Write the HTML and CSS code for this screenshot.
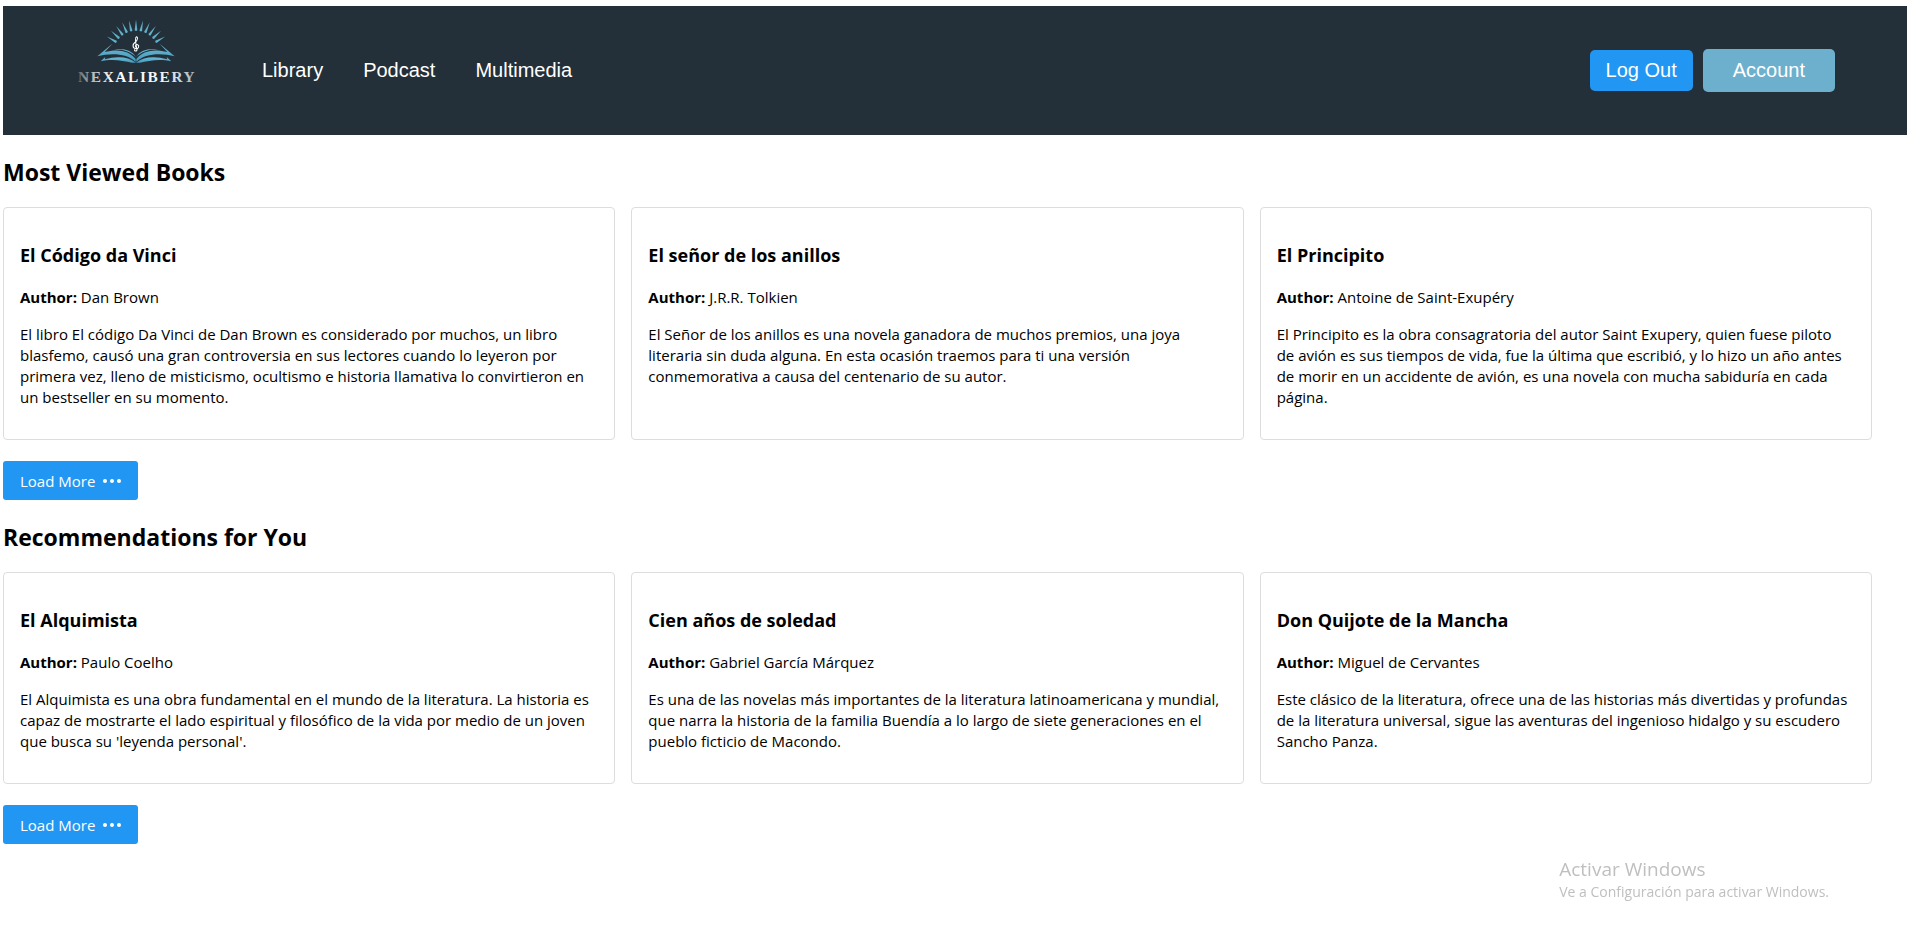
FILE: index.html
```html
<!DOCTYPE html>
<html lang="en">
<head>
<meta charset="utf-8">
<meta name="viewport" content="width=device-width, initial-scale=1">
<title>Nexalibery</title>
<link rel="stylesheet" href="styles.css">
</head>
<body>
<header class="header">
  <svg class="logo" viewBox="0 0 405 333" role="img" aria-label="Nexalibery">
    <defs>
      <linearGradient id="blue" x1="0" y1="0" x2="0" y2="1">
        <stop offset="0" stop-color="#6fc0d4"/>
        <stop offset="1" stop-color="#4496bd"/>
      </linearGradient>
      <linearGradient id="silver">
        <stop offset="0" stop-color="#5d686f"/>
        <stop offset=".12" stop-color="#b4babd"/>
        <stop offset=".3" stop-color="#ffffff"/>
        <stop offset=".75" stop-color="#f1f2f3"/>
        <stop offset="1" stop-color="#a9b0b4"/>
      </linearGradient>
      <path id="ray" d="M198 14 L202 46 Q198 50 194 46 Z"/>
      <g id="page">
        <path d="M127 86 L82 124 C120 114 172 114 197 141 V132 C177 106 142 101 104 111 Z"/>
        <path d="M198 126 C188 108 162 99 133 103 C164 103 184 113 198 126 Z"/>
        <path d="M106 126 L92 139 C128 130 160 138 186 143 H198 C174 126 144 122 104 133 Z"/>
      </g>
    </defs>
    <g fill="#62afc8">
      <use href="#ray"/>
      <use href="#ray" transform="rotate(-12 198 115)"/>
      <use href="#ray" transform="rotate(-24 198 115)"/>
      <use href="#ray" transform="rotate(-36 198 115)"/>
      <use href="#ray" transform="rotate(-48 198 115)"/>
      <use href="#ray" transform="rotate(-60 198 115)"/>
      <use href="#ray" transform="rotate(12 198 115)"/>
      <use href="#ray" transform="rotate(24 198 115)"/>
      <use href="#ray" transform="rotate(36 198 115)"/>
      <use href="#ray" transform="rotate(48 198 115)"/>
      <use href="#ray" transform="rotate(60 198 115)"/>
    </g>
    <g fill="url(#blue)">
      <use href="#page"/>
      <use href="#page" transform="translate(396 0) scale(-1 1)"/>
    </g>
    <path d="M200 98 C194 95 196 87 203 89 C209 92 206 102 198 101 C186 99 187 88 196 81 C204 74 204 65 199 65 C194 67 196 80 201 104 C201 110 192 109 194 104" fill="none" stroke="#fff" stroke-width="3.2" stroke-linecap="round"/>
    <text class="wordmark" x="24" y="200" fill="url(#silver)">NEXALIBERY</text>
  </svg>
  <nav class="nav">
    <a href="#library">Library</a>
    <a href="#podcast">Podcast</a>
    <a href="#multimedia">Multimedia</a>
  </nav>
  <div class="actions">
    <button class="logout" type="button">Log Out</button>
    <button class="account" type="button">Account</button>
  </div>
</header>
<main>
  <section>
    <h2>Most Viewed Books</h2>
    <div class="books">
      <article class="book">
        <h3>El Código da Vinci</h3>
        <p><strong>Author:</strong> Dan Brown</p>
        <p>El libro El código Da Vinci de Dan Brown es considerado por muchos, un libro blasfemo, causó una gran controversia en sus lectores cuando lo leyeron por primera vez, lleno de misticismo, ocultismo e historia llamativa lo convirtieron en un bestseller en su momento.</p>
      </article>
      <article class="book">
        <h3>El señor de los anillos</h3>
        <p><strong>Author:</strong> J.R.R. Tolkien</p>
        <p>El Señor de los anillos es una novela ganadora de muchos premios, una joya literaria sin duda alguna. En esta ocasión traemos para ti una versión conmemorativa a causa del centenario de su autor.</p>
      </article>
      <article class="book">
        <h3>El Principito</h3>
        <p><strong>Author:</strong> Antoine de Saint-Exupéry</p>
        <p>El Principito es la obra consagratoria del autor Saint Exupery, quien fuese piloto de avión es sus tiempos de vida, fue la última que escribió, y lo hizo un año antes de morir en un accidente de avión, es una novela con mucha sabiduría en cada página.</p>
      </article>
    </div>
    <button class="load-more" type="button">Load More
      <svg class="dots" viewBox="0 0 18 6" aria-hidden="true"><circle cx="2" cy="2" r="2"/><circle cx="9" cy="2" r="2"/><circle cx="16" cy="2" r="2"/></svg>
    </button>
  </section>
  <section>
    <h2>Recommendations for You</h2>
    <div class="books">
      <article class="book">
        <h3>El Alquimista</h3>
        <p><strong>Author:</strong> Paulo Coelho</p>
        <p>El Alquimista es una obra fundamental en el mundo de la literatura. La historia es capaz de mostrarte el lado espiritual y filosófico de la vida por medio de un joven que busca su 'leyenda personal'.</p>
      </article>
      <article class="book">
        <h3>Cien años de soledad</h3>
        <p><strong>Author:</strong> Gabriel García Márquez</p>
        <p>Es una de las novelas más importantes de la literatura latinoamericana y mundial, que narra la historia de la familia Buendía a lo largo de siete generaciones en el pueblo ficticio de Macondo.</p>
      </article>
      <article class="book">
        <h3>Don Quijote de la Mancha</h3>
        <p><strong>Author:</strong> Miguel de Cervantes</p>
        <p>Este clásico de la literatura, ofrece una de las historias más divertidas y profundas de la literatura universal, sigue las aventuras del ingenioso hidalgo y su escudero Sancho Panza.</p>
      </article>
    </div>
    <button class="load-more" type="button">Load More
      <svg class="dots" viewBox="0 0 18 6" aria-hidden="true"><circle cx="2" cy="2" r="2"/><circle cx="9" cy="2" r="2"/><circle cx="16" cy="2" r="2"/></svg>
    </button>
  </section>
</main>
<aside class="watermark">
  <p class="watermark-title">Activar Windows</p>
  <p>Ve a Configuración para activar Windows.</p>
</aside>
</body>
</html>
```
FILE: styles.css
```css
* {
  box-sizing: border-box;
}

body {
  margin: 6px 8px 0 3px;
  background: #fff;
  color: #000;
  font-family: "Segoe UI", "Open Sans", "Noto Sans", sans-serif;
  font-size: 15px;
  line-height: 21px;
}

.header {
  display: flex;
  align-items: center;
  padding: 9px 72px 9px 67px;
  background: #23303a;
  font-family: Arial, "Liberation Sans", sans-serif;
  font-size: 20px;
}

.logo {
  flex: none;
  width: 135px;
  height: 111px;
}

.wordmark {
  font-family: "Liberation Serif", serif;
  font-size: 46px;
  font-weight: 700;
  letter-spacing: 5px;
}

.nav {
  display: flex;
  gap: 40px;
  margin-left: 57px;
}

.nav a {
  color: #fff;
  text-decoration: none;
}

.actions {
  display: flex;
  align-items: center;
  gap: 10px;
  margin-left: auto;
}

button {
  border: 0;
  background: #2196f3;
  color: #fff;
  font: inherit;
  cursor: pointer;
}

.logout {
  padding: 10px 16px;
  border-radius: 5px;
}

.account {
  padding: 11px 30px;
  border-radius: 5px;
  background: #6cb0cd;
}

main {
  padding-right: 35px;
}

h2 {
  margin: 21px 0 19px;
  font-size: 23px;
  line-height: 32px;
}

.books {
  display: grid;
  grid-template-columns: repeat(3, 1fr);
  gap: 16px;
}

.book {
  padding: 16px 20px 15px 16px;
  border: 1px solid #ddd;
  border-radius: 4px;
}

h3 {
  margin: 19px 0;
  font-size: 18px;
  line-height: 25px;
}

p {
  margin: 16px 0;
}

.load-more {
  display: flex;
  align-items: center;
  gap: 8px;
  margin-top: 21px;
  padding: 10px 17px 8px;
  border-radius: 3px;
}

.dots {
  width: 18px;
  height: 6px;
  fill: #fff;
}

.watermark {
  position: fixed;
  right: 86px;
  bottom: 34px;
  color: #bfbfbf;
  font-size: 14px;
}

.watermark p {
  margin: 0;
}

.watermark .watermark-title {
  font-size: 19px;
  line-height: 24px;
}
```
